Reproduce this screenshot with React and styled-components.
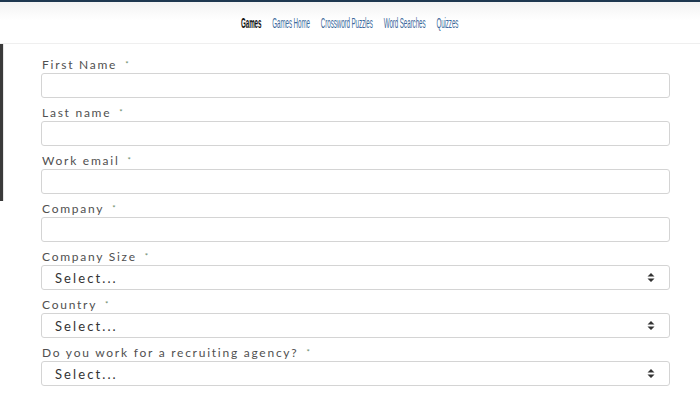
import styled, { createGlobalStyle } from 'styled-components';

const GlobalStyle = createGlobalStyle`
  html, body {
    margin: 0;
    padding: 0;
    background: #fff;
    font-family: Lato, 'Open Sans', sans-serif;
  }
`;

const Header = styled.header`
  height: 41px;
  border-top: 2px solid #1e3850;
  border-bottom: 1px solid #efefef;
  background: linear-gradient(#f3f3f3, #fff 45%);
  display: flex;
  align-items: center;
  justify-content: center;
`;

const Nav = styled.nav`
  display: flex;
  gap: 24.5px;
  transform: scaleX(0.446);
  font-family: 'Liberation Sans', Arial, sans-serif;
  font-size: 14px;
  letter-spacing: -0.2px;
`;

const NavLink = styled.a`
  color: ${(p) => (p.$active ? '#111' : '#3d6a9c')};
  font-weight: ${(p) => (p.$active ? 700 : 400)};
  text-decoration: none;
`;

const Page = styled.div`
  display: flex;
`;

const SideBar = styled.div`
  width: 3px;
  height: 157px;
  background: #3a3a3a;
  border-right: 1px solid #e6e6e6;
  flex-shrink: 0;
`;

const Form = styled.form`
  flex: 1;
  padding: 12px 30px 0 37px;
  display: flex;
  flex-direction: column;
`;

const Field = styled.div`
  display: flex;
  flex-direction: column;
  height: 48px;
`;

const Label = styled.label`
  font-size: 12px;
  color: #505050;
  letter-spacing: 1.75px;
  height: 16px;
  padding-top: 1px;
  line-height: 15px;
  padding-left: 1px;
`;

const Req = styled.span`
  color: #6a8a6a;
  font-size: 8px;
  margin-left: 8px;
  vertical-align: top;
`;

const Input = styled.input`
  box-sizing: border-box;
  height: 25px;
  width: 100%;
  border: 1px solid #d4d4d4;
  border-radius: 3px;
  background: #fff;
`;

const SelectBox = styled.div`
  box-sizing: border-box;
  height: 25px;
  width: 100%;
  border: 1px solid #d4d4d4;
  border-radius: 3px;
  display: flex;
  align-items: center;
  justify-content: space-between;
  padding: 0 14px 0 13px;
  font-size: 13px;
  color: #333;
  letter-spacing: 2.1px;
`;

const Arrows = () => (
  <svg width="8" height="9" viewBox="0 0 8 9">
    <path d="M4 0 L7.5 3.5 H0.5 Z M4 9 L7.5 5.5 H0.5 Z" fill="#333" />
  </svg>
);

const fields = [
  { label: 'First Name' },
  { label: 'Last name' },
  { label: 'Work email' },
  { label: 'Company' },
  { label: 'Company Size', select: true },
  { label: 'Country', select: true },
  { label: 'Do you work for a recruiting agency?', select: true },
];

export default function App() {
  return (
    <>
      <GlobalStyle />
      <Header>
        <Nav>
          <NavLink $active>Games</NavLink>
          <NavLink>Games Home</NavLink>
          <NavLink>Crossword Puzzles</NavLink>
          <NavLink>Word Searches</NavLink>
          <NavLink>Quizzes</NavLink>
        </Nav>
      </Header>
      <Page>
        <SideBar />
        <Form onSubmit={(e) => e.preventDefault()}>
          {fields.map((f) => (
            <Field key={f.label}>
              <Label>
                {f.label}
                <Req>*</Req>
              </Label>
              {f.select ? (
                <SelectBox>
                  Select...
                  <Arrows />
                </SelectBox>
              ) : (
                <Input type="text" />
              )}
            </Field>
          ))}
        </Form>
      </Page>
    </>
  );
}
